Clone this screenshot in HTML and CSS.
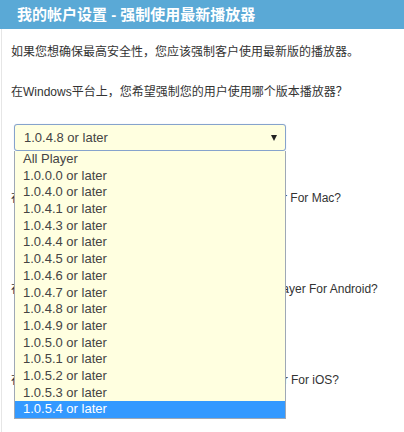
FILE: index.html
```html
<!DOCTYPE html>
<html lang="zh-CN">
<head>
<meta charset="utf-8">
<title>我的帐户设置 - 强制使用最新播放器</title>
<link rel="stylesheet" href="styles.css">
</head>
<body>
<div class="panel">
  <div class="header">我的帐户设置 - 强制使用最新播放器</div>
  <div class="content">
    <p class="intro">如果您想确保最高安全性，您应该强制客户使用最新版的播放器。</p>

    <section class="platform first">
      <p class="question">在Windows平台上，您希望强制您的用户使用哪个版本播放器？</p>
      <div class="select-wrap">
        <div class="select open">
          <span class="value">1.0.4.8 or later</span>
          <span class="arrow"></span>
        </div>
        <ul class="dropdown">
          <li>All Player</li>
          <li>1.0.0.0 or later</li>
          <li>1.0.4.0 or later</li>
          <li>1.0.4.1 or later</li>
          <li>1.0.4.3 or later</li>
          <li>1.0.4.4 or later</li>
          <li>1.0.4.5 or later</li>
          <li>1.0.4.6 or later</li>
          <li>1.0.4.7 or later</li>
          <li>1.0.4.8 or later</li>
          <li>1.0.4.9 or later</li>
          <li>1.0.5.0 or later</li>
          <li>1.0.5.1 or later</li>
          <li>1.0.5.2 or later</li>
          <li>1.0.5.3 or later</li>
          <li class="selected">1.0.5.4 or later</li>
        </ul>
      </div>
    </section>

    <section class="platform">
      <p class="question">在Mac平台上，您希望强制用户使用哪个版本 Player For Mac?</p>
      <div class="select"><span class="value">All Player</span><span class="arrow"></span></div>
    </section>

    <section class="platform">
      <p class="question">在Android平台上，您希望强制用户使用哪个版本 Player For Android?</p>
      <div class="select"><span class="value">All Player</span><span class="arrow"></span></div>
    </section>

    <section class="platform">
      <p class="question">在iOS平台上，您希望强制用户使用哪个版本  Player For iOS?</p>
    </section>
  </div>
</div>
</body>
</html>
```
FILE: styles.css
```css
* {
  box-sizing: border-box;
}

html, body {
  margin: 0;
  padding: 0;
  background: #ffffff;
  overflow: hidden;
}

body {
  font-family: "Liberation Sans", Arial, "Noto Sans CJK SC", sans-serif;
  font-size: 12px;
  color: #333333;
  width: 404px;
  height: 432px;
}

.panel {
  height: 432px;
  border-left: 1px solid #e6e6e6;
  margin-left: 1px;
}

.header {
  height: 29px;
  margin-left: -2px;
  background: #5aa9d6;
  color: #ffffff;
  font-weight: bold;
  font-size: 15px;
  line-height: 29px;
  padding-left: 17px;
}

.content {
  padding-left: 9px;
  padding-top: 14px;
}

p {
  margin: 0;
  line-height: 18px;
  white-space: pre;
}

.intro {
  margin-bottom: 22px;
}

.platform .question {
  margin-bottom: 23px;
}

.platform.first {
  margin-bottom: 38px;
}

.platform {
  margin-bottom: 23px;
}

.select-wrap {
  position: relative;
  width: 272px;
  margin-left: 3px;
}

.select {
  position: relative;
  width: 272px;
  height: 27px;
  margin-left: 3px;
  background: #ffffe0;
  border: 1px solid #8ea9cf;
  border-radius: 3px;
  font-size: 13px;
  line-height: 25px;
  padding-left: 9px;
  color: #444444;
}

.select-wrap .select {
  margin-left: 0;
}

.select.open {
  border-color: #86a3cc;
  box-shadow: 0 0 1px rgba(100, 140, 200, 0.4);
}

.arrow {
  position: absolute;
  right: 8px;
  top: 10px;
  width: 0;
  height: 0;
  border-left: 3.5px solid transparent;
  border-right: 3.5px solid transparent;
  border-top: 6px solid #222222;
}

.dropdown {
  position: absolute;
  left: 0;
  top: 27px;
  width: 272px;
  margin: 0;
  padding: 0;
  list-style: none;
  background: #ffffe0;
  border: 1px solid #9ea8b6;
  border-top: none;
  z-index: 10;
}

.dropdown li {
  height: 16.7px;
  line-height: 16.7px;
  font-size: 13px;
  padding-left: 8px;
  color: #444444;
}

.dropdown li.selected {
  background: #3399ff;
  color: #ffffff;
}
```
